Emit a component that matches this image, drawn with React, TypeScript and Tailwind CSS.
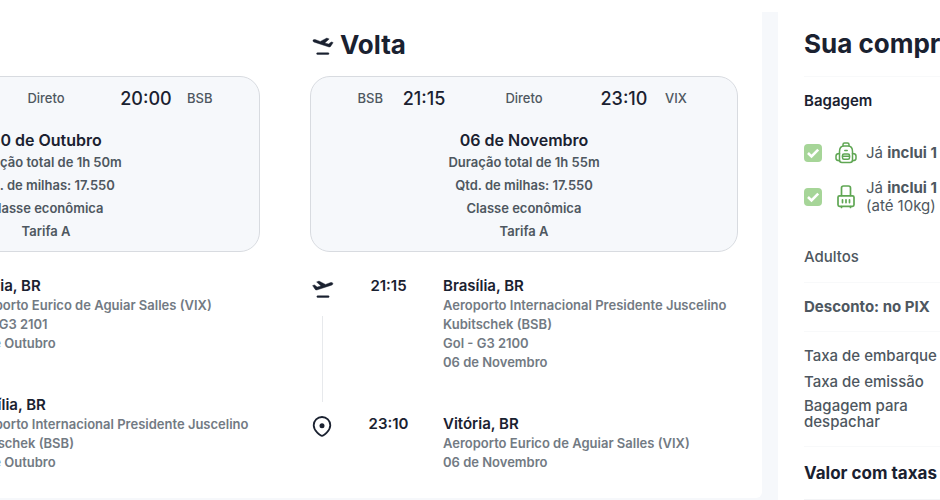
import { clsx } from 'clsx'

type Stop = {
  time?: string
  city: string
  lines: string[]
}

type Flight = {
  title?: string
  from?: string
  departure?: string
  arrival: string
  to: string
  date: string
  details: string[]
  stops: [Stop, Stop]
}

const outbound: Flight = {
  arrival: '20:00',
  to: 'BSB',
  date: '30 de Outubro',
  details: [
    'Duração total de 1h 50m',
    'Qtd. de milhas: 17.550',
    'Classe econômica',
    'Tarifa A',
  ],
  stops: [
    {
      city: 'Vitória, BR',
      lines: [
        'Aeroporto Eurico de Aguiar Salles (VIX)',
        'Gol - G3 2101',
        '30 de Outubro',
      ],
    },
    {
      city: 'Brasília, BR',
      lines: [
        'Aeroporto Internacional Presidente Juscelino',
        'Kubitschek (BSB)',
        '30 de Outubro',
      ],
    },
  ],
}

const inbound: Flight = {
  title: 'Volta',
  from: 'BSB',
  departure: '21:15',
  arrival: '23:10',
  to: 'VIX',
  date: '06 de Novembro',
  details: [
    'Duração total de 1h 55m',
    'Qtd. de milhas: 17.550',
    'Classe econômica',
    'Tarifa A',
  ],
  stops: [
    {
      time: '21:15',
      city: 'Brasília, BR',
      lines: [
        'Aeroporto Internacional Presidente Juscelino',
        'Kubitschek (BSB)',
        'Gol - G3 2100',
        '06 de Novembro',
      ],
    },
    {
      time: '23:10',
      city: 'Vitória, BR',
      lines: ['Aeroporto Eurico de Aguiar Salles (VIX)', '06 de Novembro'],
    },
  ],
}

export default function App() {
  return (
    <div className="flex overflow-hidden bg-white pt-3 font-['Inter','Liberation_Sans',sans-serif] text-[#1a2130]">
      <main className="flex min-w-0 flex-1 flex-col bg-[#f6f8fb]">
        <div className="flex justify-end gap-[50px] overflow-hidden rounded-br-md bg-white pr-6 pb-[26px]">
          <FlightColumn flight={outbound} />
          <FlightColumn flight={inbound} />
        </div>
        <div className="h-1" />
      </main>
      <div className="w-4 shrink-0 bg-[#f6f8fb]" />
      <Summary />
    </div>
  )
}

const FlightColumn = ({ flight }: { flight: Flight }) => (
  <section className="w-[428px] shrink-0">
    <h2 className="mt-4 mb-4 flex h-8 items-center gap-1.5 text-[26px] font-bold">
      {flight.title && (
        <>
          <PlaneIcon flipped />
          {flight.title}
        </>
      )}
    </h2>
    <FlightCard flight={flight} />
    <div className="mt-6">
      {flight.stops.map((stop, index) => (
        <StopRow key={stop.city} stop={stop} last={index === 1} />
      ))}
    </div>
  </section>
)

const FlightCard = ({ flight }: { flight: Flight }) => (
  <div className="h-44 rounded-[20px] border border-[#d8dbe0] bg-[#f6f8fb] pt-2 text-center text-[13px] font-medium text-[#4e5760]">
    <div className="grid h-7 grid-cols-[1fr_82px_118px_82px_1fr] items-center">
      <span className="text-right">{flight.from}</span>
      <span className="text-lg text-[#1a2130]">{flight.departure}</span>
      <span>Direto</span>
      <span className="text-lg text-[#1a2130]">{flight.arrival}</span>
      <span className="text-left">{flight.to}</span>
    </div>
    <h3 className="mt-4 text-base leading-[22px] font-semibold text-[#1a2130]">
      {flight.date}
    </h3>
    {flight.details.map((detail) => (
      <p key={detail} className="leading-[23px] font-semibold">
        {detail}
      </p>
    ))}
  </div>
)

const StopRow = ({ stop, last }: { stop: Stop; last: boolean }) => (
  <div className="grid grid-cols-[24px_109px_1fr]">
    <div className="flex flex-col items-center">
      {last ? <PinIcon /> : <PlaneIcon />}
      {!last && <div className="mt-4 mb-3 w-px flex-1 bg-[#e7e9ec]" />}
    </div>
    <time className="text-center text-[15px] leading-5 font-semibold">
      {stop.time}
    </time>
    <div
      className={clsx(
        'text-[13px] leading-[19px] font-semibold whitespace-nowrap text-[#727a83]',
        !last && 'pb-[42px]',
      )}
    >
      <h4 className="text-[15px] leading-5 text-[#1a2130]">{stop.city}</h4>
      {stop.lines.map((line) => (
        <p key={line}>{line}</p>
      ))}
    </div>
  </div>
)

const Summary = () => (
  <aside className="w-[162px] shrink-0 overflow-hidden pl-[26px] text-[15px] whitespace-nowrap text-[#4e5760]">
    <h2 className="border-b border-[#f8f9fa] pt-4 pb-4 text-[26px] leading-8 font-bold text-[#1a2130]">
      Sua compra
    </h2>
    <h3 className="mt-3 leading-6 font-semibold text-[#1a2130]">Bagagem</h3>
    <label className="mt-[26px] flex h-7 items-center">
      <GreenCheck />
      <BackpackIcon />
      <span>
        Já <b className="font-bold">inclui 1</b>
      </span>
    </label>
    <label className="mt-3 flex h-9 items-center leading-[18px]">
      <GreenCheck />
      <SuitcaseIcon />
      <span>
        Já <b className="font-bold">inclui 1</b>
        <br />
        (até 10kg)
      </span>
    </label>
    <p className="mt-8 border-b border-[#f8f9fa] pb-[15px] leading-5 font-medium">
      Adultos
    </p>
    <p className="border-b border-[#f8f9fa] py-3.5 leading-5 font-bold">
      Desconto: no PIX
    </p>
    <div className="flex flex-col gap-1.5 border-b border-[#f8f9fa] pt-3.5 pb-4 leading-5 font-medium">
      <p>Taxa de embarque</p>
      <p>Taxa de emissão</p>
      <p className="leading-4">
        Bagagem para
        <br />
        despachar
      </p>
    </div>
    <p className="border-b border-[#f3f4f6] py-4 text-[17px] leading-5 font-bold text-[#1a2130]">
      Valor com taxas
    </p>
  </aside>
)

const GreenCheck = () => (
  <span className="relative mr-[13px] h-[18px] w-[18px] shrink-0">
    <input
      type="checkbox"
      defaultChecked
      className="block h-[18px] w-[18px] appearance-none rounded bg-[#a6d598]"
    />
    <svg
      viewBox="0 0 18 18"
      className="pointer-events-none absolute inset-0"
      fill="none"
      stroke="#fff"
      strokeWidth="2.6"
      aria-hidden="true"
    >
      <path d="M4 9 7.5 12.4 14.2 5.6" />
    </svg>
  </span>
)

const PlaneIcon = ({ flipped = false }: { flipped?: boolean }) => (
  <svg
    width="24"
    height="24"
    viewBox="0 0 24 24"
    fill="currentColor"
    stroke="currentColor"
    strokeWidth="0.4"
    strokeLinejoin="round"
    className="shrink-0"
    aria-hidden="true"
  >
    <g transform={flipped ? 'matrix(-1 0 0 1 25.8 1)' : undefined}>
      <path d="M2.6 9.6 4.5 8.9 7.2 11 11 9.9 6.6 6 9 5.100 15.5 8.4 20.6 6.6Q22.600 6.100 22.900 7.500 23.100 8.700 21.500 9.200L6.800 14Q5.800 14.200 5.200 13.400Z" />
      <rect x="6.800" y="19.700" width="12.400" height="1.800" rx="0.900" />
    </g>
  </svg>
)

const PinIcon = () => (
  <svg
    width="24"
    height="24"
    viewBox="0 0 24 24"
    fill="none"
    stroke="currentColor"
    strokeWidth="1.8"
    strokeLinejoin="round"
    aria-hidden="true"
  >
    <path d="M12 21.900C10.500 21.900 3.700 17 3.700 11.300a8.300 8.300 0 0 1 16.600 0C20.300 17 13.500 21.900 12 21.900Z" />
    <circle cx="12" cy="11.700" r="2.500" fill="currentColor" stroke="none" />
  </svg>
)

const BackpackIcon = () => (
  <svg
    width="22"
    height="22"
    viewBox="0 0 22 22"
    fill="none"
    stroke="#5fa653"
    strokeWidth="1.5"
    strokeLinecap="round"
    strokeLinejoin="round"
    className="mr-[9px] shrink-0"
    aria-hidden="true"
  >
    <path d="M8 3.800V2.500Q8 1 9.500 1h3Q14 1 14 2.500V3.800" />
    <path d="M4.500 9.500Q4.500 4 9 4h4Q17.500 4 17.500 9.500V18q0 2.500-2.500 2.500H7Q4.500 20.500 4.500 18Z" />
    <path d="M4.500 11.500Q1 11.500 1 14v2.500q0 2.200 3.500 2.200M17.500 11.500Q21 11.500 21 14v2.500q0 2.200-3.500 2.200M9.800 8.500h2.400" />
    <rect x="7.500" y="12" width="7" height="5.200" rx="1.500" />
    <path d="M7.500 14.300h7" />
  </svg>
)

const SuitcaseIcon = () => (
  <svg
    width="22"
    height="24"
    viewBox="0 0 22 24"
    fill="none"
    stroke="#5fa653"
    strokeWidth="1.7"
    strokeLinecap="round"
    strokeLinejoin="round"
    className="mr-[9px] shrink-0"
    aria-hidden="true"
  >
    <path d="M6.500 10.500V3q0-2 2-2h5q2 0 2 2v7.500" />
    <rect x="3" y="10.800" width="16" height="10.500" rx="1.500" />
    <path d="M7.500 14.800v2.800M11 14.800v2.800M14.500 14.800v2.800M6.500 21.500v1M15.500 21.500v1" />
  </svg>
)
